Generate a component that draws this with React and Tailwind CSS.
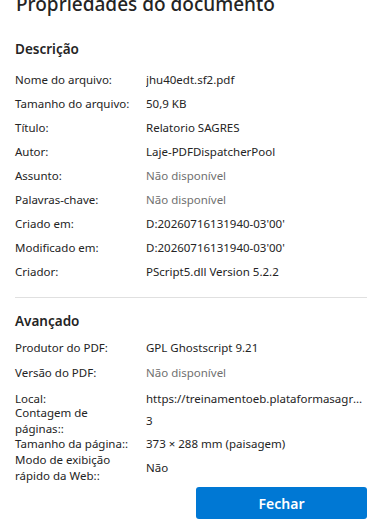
import React from 'react';

const descricao = [
    { label: 'Nome do arquivo:', value: 'jhu40edt.sf2.pdf' },
    { label: 'Tamanho do arquivo:', value: '50,9 KB' },
    { label: 'Título:', value: 'Relatorio SAGRES' },
    { label: 'Autor:', value: 'Laje-PDFDispatcherPool' },
    { label: 'Assunto:', value: 'Não disponível', muted: true },
    { label: 'Palavras-chave:', value: 'Não disponível', muted: true },
    { label: 'Criado em:', value: "D:20260716131940-03'00'" },
    { label: 'Modificado em:', value: "D:20260716131940-03'00'" },
    { label: 'Criador:', value: 'PScript5.dll Version 5.2.2' },
];

function Row({ label, value, muted }) {
    return (
        <div className="grid grid-cols-[131px_1fr] items-center h-6">
            <span className="pr-2">{label}</span>
            <span className={`truncate ${muted ? 'text-[#707070]' : ''}`}>{value}</span>
        </div>
    );
}

export default function App() {
    return (
        <div
            className="w-[378px] h-[525px] overflow-hidden bg-white text-[#242424] pl-[15px] pr-[11px]"
            style={{ fontFamily: '"Noto Sans", "Open Sans", sans-serif' }}
        >
            <h1 className="text-[19px] font-medium leading-7 -mt-[10px] ml-px">Propriedades do documento</h1>

            <h2 className="mt-[21px] text-[13.5px] font-semibold leading-5">Descrição</h2>
            <div className="mt-[9px] text-[11.5px] leading-4">
                {descricao.map((r) => (
                    <Row key={r.label} {...r} />
                ))}
            </div>

            <div className="mt-[13px] h-px bg-[#e0e0e0]" />

            <h2 className="mt-[13px] text-[13.5px] font-semibold leading-5">Avançado</h2>
            <div className="mt-[5px] text-[11.5px] leading-4">
                <Row label="Produtor do PDF:" value="GPL Ghostscript 9.21" />
                <div className="h-px" />
                <Row label="Versão do PDF:" value="Não disponível" muted />
                <div className="h-[3px]" />
                {/* Local sits close to the multi-line rows below it */}
                <div className="h-[17px] grid grid-cols-[131px_1fr] items-start pt-[3px]">
                    <span>Local:</span>
                    <span className="truncate">https://treinamentoeb.plataformasagres.com.br/</span>
                </div>
                <div className="grid grid-cols-[131px_1fr] items-center leading-[15.5px]">
                    <span>Contagem de<br />páginas::</span>
                    <span>3</span>
                </div>
                <div className="grid grid-cols-[131px_1fr] items-center leading-4">
                    <span>Tamanho da página::</span>
                    <span>373 × 288 mm (paisagem)</span>
                </div>
                <div className="grid grid-cols-[131px_1fr] items-center leading-[15.5px]">
                    <span>Modo de exibição<br />rápido da Web::</span>
                    <span>Não</span>
                </div>
            </div>

            <div className="mt-[4px] flex justify-end">
                <button className="w-[171px] h-8 rounded-[3px] bg-[#0078d4] text-white text-[14px] font-semibold">
                    Fechar
                </button>
            </div>
        </div>
    );
}
